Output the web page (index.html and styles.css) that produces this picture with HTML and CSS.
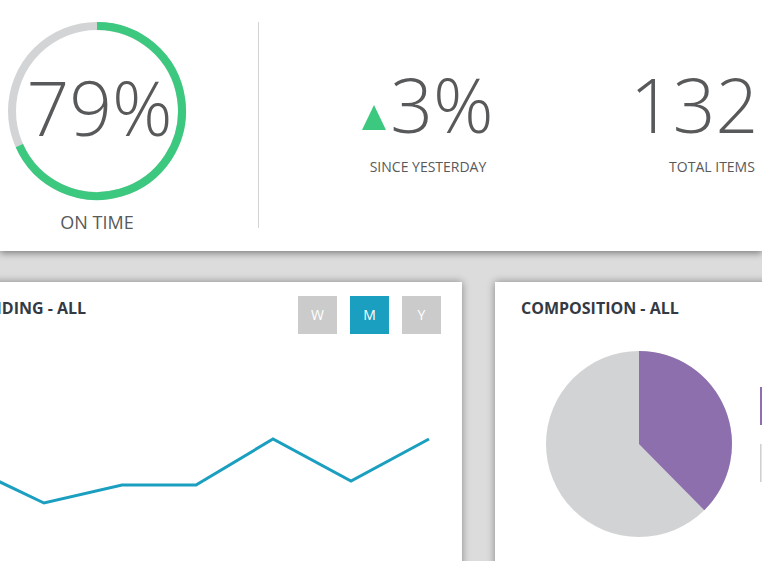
FILE: index.html
```html
<!DOCTYPE html>
<html>
<head>
<meta charset="utf-8">
<link rel="stylesheet" href="styles.css">
</head>
<body>
<div class="page">
  <section class="stats">
    <div class="ring-col">
      <div class="ring-wrap">
        <div class="ring">
          <svg width="180" height="180" viewBox="0 0 180 180">
            <circle cx="90" cy="90" r="85" fill="none" stroke="#d3d4d6" stroke-width="8"/>
            <path d="M90 5 A85 85 0 1 1 12.35 124.57" fill="none" stroke="#3cc97f" stroke-width="8"/>
          </svg>
          <div class="ring-value">79%</div>
        </div>
        <div class="label label-lg">ON TIME</div>
      </div>
    </div>
    <div class="divider"></div>
    <div class="stat">
      <div class="big"><svg class="tri" width="24" height="25" viewBox="0 0 24 25"><polygon points="12,0 24,25 0,25" fill="#3cc97f"/></svg>3%</div>
      <div class="label">SINCE YESTERDAY</div>
    </div>
    <div class="stat">
      <div class="big big-shift">132K</div>
      <div class="label">TOTAL ITEMS</div>
    </div>
  </section>

  <section class="cards">
    <div class="card card-line">
      <div class="card-head">
        <h2 class="card-title">SPENDING - ALL</h2>
        <div class="toggles">
          <span class="tbtn">W</span>
          <span class="tbtn active">M</span>
          <span class="tbtn">Y</span>
        </div>
      </div>
      <svg class="line-chart" width="527" height="240" viewBox="0 0 527 240">
        <polyline points="31.5,132 109,169 187,151 261,151 338,105 416,147 494,105" fill="none" stroke="#1b9fc0" stroke-width="3" stroke-linejoin="miter"/>
      </svg>
    </div>
    <div class="card card-pie">
      <div class="card-head">
        <h2 class="card-title">COMPOSITION - ALL</h2>
      </div>
      <div class="pie-body">
        <svg class="pie" width="186" height="186" viewBox="0 0 186 186">
          <circle cx="93" cy="93" r="93" fill="#d1d3d4"/>
          <path d="M93 93 L93 0 A93 93 0 0 1 158.3 159.2 Z" fill="#8e6fae"/>
        </svg>
        <div class="legend">
          <div class="legend-item"><span class="swatch swatch-purple"></span></div>
          <div class="legend-item"><span class="swatch swatch-gray"></span></div>
        </div>
      </div>
    </div>
  </section>
</div>
</body>
</html>
```

FILE: styles.css
```css
html, body {
  margin: 0;
  padding: 0;
}
body {
  background: #dcdcdc;
  font-family: "Open Sans", "DejaVu Sans", sans-serif;
  color: #58595b;
  width: 762px;
  height: 561px;
  overflow: hidden;
}
.page {
  width: 762px;
}
.stats {
  position: relative;
  z-index: 2;
  height: 251px;
  background: #fff;
  display: flex;
  align-items: flex-start;
  box-shadow: 0 2px 7px rgba(0, 0, 0, 0.45);
}
.ring-col {
  flex: none;
  width: 251px;
  padding-left: 7px;
  padding-top: 21px;
}
.ring-wrap {
  width: 180px;
  text-align: center;
}
.ring {
  position: relative;
  width: 180px;
  height: 180px;
}
.ring svg {
  display: block;
}
.ring-value {
  position: absolute;
  left: 0;
  right: 0;
  top: 49px;
  text-align: center;
  font-size: 75px;
  font-weight: 300;
  line-height: 1;
  padding-left: 5px;
}
.label {
  font-size: 14px;
  line-height: 1;
  text-transform: uppercase;
  white-space: nowrap;
}
.label-lg {
  font-size: 18px;
  margin-top: 12px;
}
.divider {
  width: 1px;
  height: 206px;
  margin-top: 22px;
  background: #d4d4d4;
  flex: none;
}
.stat {
  width: 284px;
  flex: none;
  text-align: center;
  padding-top: 67px;
}
.divider + .stat {
  margin-left: 27px;
}
.big {
  font-size: 75px;
  font-weight: 300;
  line-height: 1;
  white-space: nowrap;
}
.big-shift {
  padding-left: 8px;
}
.tri {
  margin-right: 4px;
  vertical-align: 3px;
}
.stat .label {
  margin-top: 18px;
}

.cards {
  display: flex;
  gap: 33px;
  padding-top: 31px;
  align-items: flex-start;
}
.card {
  background: #fff;
  box-shadow: 0 0 8px rgba(0, 0, 0, 0.4);
  height: 300px;
  flex: none;
}
.card-line {
  width: 527px;
  margin-left: -65px;
}
.card-pie {
  width: 320px;
}
.card-head {
  display: flex;
  justify-content: space-between;
  align-items: flex-start;
  padding: 14px 21px 0 26px;
  min-height: 38px;
}
.card-title {
  margin: 0;
  padding-top: 2px;
  font-size: 16px;
  font-weight: 700;
  line-height: 21px;
  color: #333a44;
  white-space: nowrap;
}
.toggles {
  display: flex;
  gap: 13px;
}
.tbtn {
  width: 39px;
  height: 38px;
  background: #cbcbcb;
  color: #fff;
  font-size: 14px;
  line-height: 38px;
  text-align: center;
}
.tbtn.active {
  background: #1b9fc0;
}
.line-chart {
  display: block;
}
.pie-body {
  display: flex;
  align-items: center;
  padding-left: 51px;
  padding-top: 17px;
}
.pie {
  display: block;
  flex: none;
}
.legend {
  margin-left: 28px;
  display: flex;
  flex-direction: column;
  gap: 19px;
  margin-top: -19px;
}
.legend-item {
  display: flex;
  align-items: center;
}
.swatch {
  width: 38px;
  height: 38px;
  flex: none;
}
.swatch-purple {
  background: #8e6fae;
}
.swatch-gray {
  background: #e3e4e5;
  border-left: 1px solid #cfd0d1;
}
```
